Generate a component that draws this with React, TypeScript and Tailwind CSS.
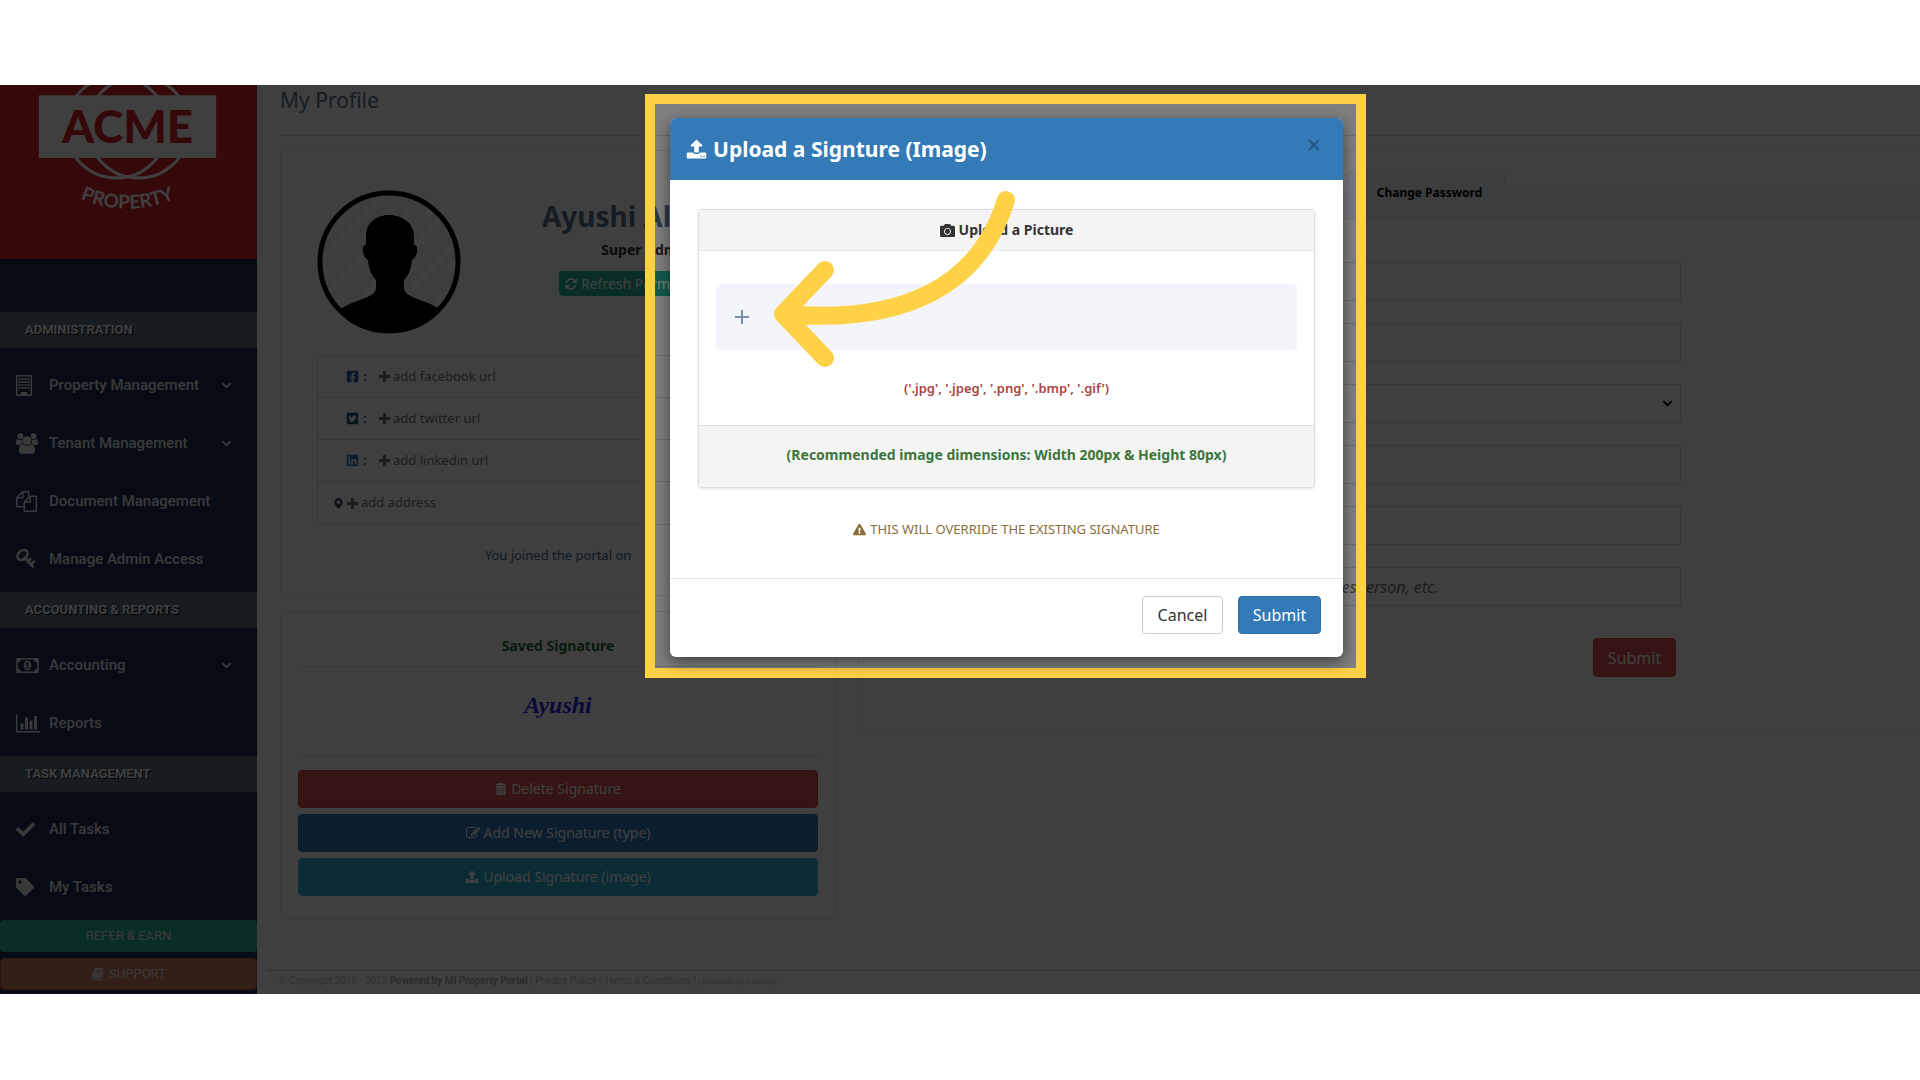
import type { ReactNode } from 'react';
import {
  FaCamera,
  FaCheck,
  FaChevronDown,
  FaExclamationTriangle,
  FaFacebookSquare,
  FaLinkedin,
  FaMapMarkerAlt,
  FaSyncAlt,
  FaTag,
  FaTrashAlt,
  FaTwitterSquare,
} from 'react-icons/fa';

type IconProps = { className?: string };

function UploadIcon({ className }: IconProps) {
  return (
    <svg viewBox="0 0 1664 1792" className={className} fill="currentColor" aria-hidden="true">
      <path d="M1280 1472q0-26-19-45t-45-19-45 19-19 45 19 45 45 19 45-19 19-45zm256 0q0-26-19-45t-45-19-45 19-19 45 19 45 45 19 45-19 19-45zm128-224v320q0 40-28 68t-68 28h-1472q-40 0-68-28t-28-68v-320q0-40 28-68t68-28h427q21 56 70.5 92t110.5 36h256q61 0 110.5-36t70.5-92h427q40 0 68 28t28 68zm-325-648q-17 40-59 40h-256v448q0 26-19 45t-45 19h-256q-26 0-45-19t-19-45v-448h-256q-42 0-59-40-17-39 14-69l448-448q18-19 45-19t45 19l448 448q31 30 14 69z" />
    </svg>
  );
}

function EditIcon({ className }: IconProps) {
  return (
    <svg viewBox="0 0 1792 1792" className={className} fill="currentColor" aria-hidden="true">
      <path d="M888 1184l116-116-152-152-116 116v56h96v96h56zm440-720q-16-16-33 1l-350 350q-17 17-1 33t33-1l350-350q17-17 1-33zm80 594v190q0 119-84.5 203.5t-203.5 84.5h-832q-119 0-203.5-84.5t-84.5-203.5v-832q0-119 84.5-203.5t203.5-84.5h832q63 0 117 25 15 7 18 23 3 17-9 29l-49 49q-14 14-32 8-23-6-45-6h-832q-66 0-113 47t-47 113v832q0 66 47 113t113 47h832q66 0 113-47t47-113v-126q0-13 9-22l64-64q15-15 35-7t20 29zm-96-738l288 288-672 672h-288v-288zm444 132l-92 92-288-288 92-92q28-28 68-28t68 28l152 152q28 28 28 68t-28 68z" />
    </svg>
  );
}

function BookIcon({ className }: IconProps) {
  return (
    <svg viewBox="0 0 1792 1792" className={className} fill="currentColor" aria-hidden="true">
      <path d="M1703 478q40 57 18 129l-275 906q-19 64-76.5 107.5t-122.5 43.5h-923q-77 0-148.5-53.5t-99.5-131.5q-24-67-2-127 0-4 3-27t4-37q1-8-3-21.5t-3-19.5q2-11 8-21t16.5-23.5 16.5-23.5q23-38 45-91.5t30-91.5q3-10 .5-30t-.5-28q3-11 17-28t17-23q21-36 42-92t25-90q1-9-2.5-32t.5-28q4-13 22-30.5t22-22.5q19-26 42.5-84.5t27.5-96.5q1-8-3-25.5t-2-26.5q2-8 9-18t18-23 17-21q8-12 16.5-30.5t15-35 16-36 19.5-32 26.5-23.5 36-11.5 47.5 5.5l-1 3q38-9 51-9h761q74 0 114 56t18 130l-274 906q-36 119-71.5 153.5t-128.5 34.5h-869q-27 0-38 15-11 16-1 43 24 70 144 70h923q29 0 56-15.5t35-41.5l300-987q7-22 5-57 38 15 59 43zm-1064 2q-4 13 2 22.5t20 9.5h608q13 0 25.5-9.5t16.5-22.5l21-64q4-13-2-22.5t-20-9.5h-608q-13 0-25.5 9.5t-16.5 22.5zm-83 256q-4 13 2 22.5t20 9.5h608q13 0 25.5-9.5t16.5-22.5l21-64q4-13-2-22.5t-20-9.5h-608q-13 0-25.5 9.5t-16.5 22.5z" />
    </svg>
  );
}

function PlusIcon() {
  return (
    <svg viewBox="0 0 11 11" className="size-[11px]" stroke="currentColor" strokeWidth="3" aria-hidden="true">
      <path d="M5.5 0v11M0 5.5h11" />
    </svg>
  );
}

function BuildingIcon() {
  return (
    <svg viewBox="0 0 16 21" className="h-[21px] w-4" fill="currentColor" aria-hidden="true">
      <path fillRule="evenodd" d="M1 0h14a1 1 0 0 1 1 1v19a1 1 0 0 1-1 1H1a1 1 0 0 1-1-1V1a1 1 0 0 1 1-1zm.5 1.5v18H5V17h6v2.5h3.5v-18z" />
      {[3, 6, 9, 12].map((y) =>
        [3, 6, 9, 12].map((x) => <rect key={`${x}-${y}`} x={x - 0.5} y={y} width="2" height="2" />)
      )}
    </svg>
  );
}

function UsersIcon() {
  return (
    <svg viewBox="0 0 1920 1792" className="h-[21px] w-[22px]" fill="currentColor" aria-hidden="true">
      <path d="M593 896q-162 5-265 128h-134q-82 0-138-40.5t-56-118.5q0-353 124-353 6 0 43.5 21t97.5 42.5 119 21.5q67 0 133-23-5 37-5 66 0 139 81 256zm1071 637q0 120-73 189.5t-194 69.5h-874q-121 0-194-69.5t-73-189.5q0-53 3.5-103.5t14-109 26.5-108.5 43-97.5 62-81 85.5-53.5 111.5-20q10 0 43 21.5t73 48 107 48 135 21.5 135-21.5 107-48 73-48 43-21.5q61 0 111.5 20t85.5 53.5 62 81 43 97.5 26.5 108.5 14 109 3.5 103.5zm-1024-1277q0 106-75 181t-181 75-181-75-75-181 75-181 181-75 181 75 75 181zm704 384q0 159-112.5 271.5t-271.5 112.5-271.5-112.5-112.5-271.5 112.5-271.5 271.5-112.5 271.5 112.5 112.5 271.5zm576 225q0 78-56 118.5t-138 40.5h-134q-103-123-265-128 81-117 81-256 0-29-5-66 66 23 133 23 59 0 119-21.5t97.5-42.5 43.5-21q124 0 124 353zm-128-609q0 106-75 181t-181 75-181-75-75-181 75-181 181-75 181 75 75 181z" />
    </svg>
  );
}

function FilesIcon() {
  return (
    <svg viewBox="0 0 1792 1792" className="h-[21px] w-[21px]" fill="currentColor" aria-hidden="true">
      <path d="M1696 384q40 0 68 28t28 68v1216q0 40-28 68t-68 28h-960q-40 0-68-28t-28-68v-288h-544q-40 0-68-28t-28-68v-672q0-40 20-88t48-76l408-408q28-28 76-48t88-20h416q40 0 68 28t28 68v328q68-40 128-40h416zm-544 213l-299 299h299v-299zm-640-384l-299 299h299v-299zm196 647l316-316v-416h-384v416q0 40-28 68t-68 28h-416v640h512v-256q0-40 20-88t48-76zm956 804v-1152h-384v416q0 40-28 68t-68 28h-416v640h896z" />
    </svg>
  );
}

function KeyIcon() {
  return (
    <svg viewBox="0 0 20 20" className="h-5 w-5" fill="none" stroke="currentColor" aria-hidden="true">
      <ellipse cx="6.5" cy="6" rx="5.6" ry="4.3" strokeWidth="2.6" transform="rotate(-45 6.5 6)" />
      <path d="M8.5 9l8.5 8.5M12 12.5l2.5-2.5M15 15.5l3-3" strokeWidth="2.6" strokeLinecap="round" />
    </svg>
  );
}

function MoneyIcon() {
  return (
    <svg viewBox="0 0 1920 1792" className="h-[21px] w-[23px]" fill="currentColor" aria-hidden="true">
      <path d="M768 1152h384v-96h-128v-448h-114l-148 137 77 80q42-37 55-57h2v288h-128v96zm512-256q0 70-21 142t-59.5 134-101.5 101-138 39-138-39-101.5-101-59.5-134-21-142 21-142 59.5-134 101.5-101 138-39 138 39 101.5 101 59.5 134 21 142zm512 256v-512q-106 0-181-75t-75-181h-1152q0 106-75 181t-181 75v512q106 0 181 75t75 181h1152q0-106 75-181t181-75zm128-832v1152q0 26-19 45t-45 19h-1792q-26 0-45-19t-19-45v-1152q0-26 19-45t45-19h1792q26 0 45 19t19 45z" />
    </svg>
  );
}

function ChartIcon() {
  return (
    <svg viewBox="0 0 2048 1792" className="h-[21px] w-6" fill="currentColor" aria-hidden="true">
      <path d="M640 896v512h-256v-512h256zm384-512v1024h-256v-1024h256zm1024 1152v128h-2048v-1536h128v1408h1920zm-640-896v768h-256v-768h256zm384-384v1152h-256v-1152h256z" />
    </svg>
  );
}

function Logo() {
  return (
    <svg viewBox="0 0 258 174" className="h-[174px] w-full" role="img" aria-label="ACME Property">
      <g fill="none" stroke="#fff" strokeWidth="3">
        <circle cx="117" cy="42" r="51" />
        <circle cx="139" cy="42" r="51" />
      </g>
      <rect x="39" y="10" width="178" height="63" fill="#fff" />
      <text x="128" y="58" textAnchor="middle" fill="#d7202b" className="font-['Lato'] text-[46px] font-black">
        ACME
      </text>
      <path id="logo-arc" d="M64 105A119 119 0 0 0 192 105" fill="none" />
      <text fill="#fff" textAnchor="middle" className="font-['Lato'] text-[19px] font-bold">
        <textPath href="#logo-arc" startOffset="50%">
          PROPERTY
        </textPath>
      </text>
    </svg>
  );
}

type NavItem = { label: string; icon: ReactNode; expandable?: boolean };

const navGroups: { title: string; items: NavItem[] }[] = [
  {
    title: 'ADMINISTRATION',
    items: [
      { label: 'Property Management', icon: <BuildingIcon />, expandable: true },
      { label: 'Tenant Management', icon: <UsersIcon />, expandable: true },
      { label: 'Document Management', icon: <FilesIcon /> },
      { label: 'Manage Admin Access', icon: <KeyIcon /> },
    ],
  },
  {
    title: 'ACCOUNTING & REPORTS',
    items: [
      { label: 'Accounting', icon: <MoneyIcon />, expandable: true },
      { label: 'Reports', icon: <ChartIcon /> },
    ],
  },
  {
    title: 'TASK MANAGEMENT',
    items: [
      { label: 'All Tasks', icon: <FaCheck size={19} /> },
      { label: 'My Tasks', icon: <FaTag size={18} /> },
    ],
  },
];

function Sidebar() {
  return (
    <aside className="w-[257px] shrink-0 bg-[#1c2c58] pb-1 font-['Roboto',sans-serif] text-[#e7e7e7]">
      <div className="bg-[#d7202b]">
        <Logo />
      </div>
      <nav className="pt-[53px]">
        {navGroups.map((group) => (
          <div key={group.title}>
            <h3 className="flex h-9 items-center bg-[#5f7284] pl-[25px] text-[13px] font-bold text-white [text-shadow:1px_1px_#000]">
              {group.title}
            </h3>
            <ul className="pt-2 pb-1">
              {group.items.map((item) => (
                <li key={item.label}>
                  <a href="#" className="flex h-[58px] items-center pr-[25px] pl-4 text-[15px] font-medium">
                    <span className="w-[33px]">{item.icon}</span>
                    <span className="flex-1">{item.label}</span>
                    {item.expandable && <FaChevronDown size={11} />}
                  </a>
                </li>
              ))}
            </ul>
          </div>
        ))}
      </nav>
      <div className="flex flex-col gap-[6px] text-center text-[13px]">
        <a href="#" className="block rounded-sm bg-[#26b99a] leading-8">
          REFER &amp; EARN
        </a>
        <a href="#" className="flex h-8 items-center justify-center gap-1 rounded-sm border border-[#b8502a] bg-[#c87c5c]">
          <BookIcon className="size-[14px]" /> SUPPORT
        </a>
      </div>
    </aside>
  );
}

const socialLinks = [
  { name: 'facebook', icon: <FaFacebookSquare size={13} className="text-[#2f5f9a]" /> },
  { name: 'twitter', icon: <FaTwitterSquare size={13} className="text-[#1a5276]" /> },
  { name: 'linkedin', icon: <FaLinkedin size={13} className="text-[#337ab7]" /> },
];

function Avatar() {
  return (
    <svg viewBox="0 0 144 144" className="size-36" role="img" aria-label="Profile photo">
      <defs>
        <clipPath id="avatar-clip">
          <circle cx="72" cy="72" r="69" />
        </clipPath>
        <pattern id="avatar-stripes" width="14" height="14" patternUnits="userSpaceOnUse" patternTransform="rotate(45)">
          <rect width="14" height="14" fill="#fff" />
          <rect width="7" height="14" fill="#f2f2f2" />
        </pattern>
      </defs>
      <circle cx="72" cy="72" r="69" fill="url(#avatar-stripes)" />
      <path
        clipPath="url(#avatar-clip)"
        d="M72 25C58 25 49 34 49 46v9c-5-1-4 12 2 15 1 10 4 16 8 20v8c0 6-8 9-16 12-9 3-18 7-24 13v25h108v-25c-6-6-15-10-24-13-8-3-16-6-16-12v-8c4-4 7-10 8-20 6-3 7-16 2-15v-9C97 34 86 25 72 25z"
      />
      <circle cx="72" cy="72" r="69" fill="none" stroke="#000" strokeWidth="5" />
    </svg>
  );
}

function ProfileCard() {
  return (
    <section className="h-[446px] rounded-sm border border-[#e6e9ed] px-9 pt-[39px]">
      <div className="flex">
        <Avatar />
        <div className="flex flex-1 flex-col items-center pt-2 pl-8">
          <h2 className="text-[28px] leading-9 font-bold text-[#5a738e]">Ayushi Alaman</h2>
          <p className="pt-[6px] text-sm font-bold text-[#333]">Super Admin</p>
          <button className="mt-[11px] flex h-[25px] w-[174px] items-center gap-1 rounded-sm bg-[#26b99a] px-[6px] text-sm whitespace-nowrap text-white">
            <FaSyncAlt size={12} className="shrink-0" /> Refresh Permissions
          </button>
        </div>
      </div>
      <ul className="mt-[21px] divide-y divide-[#ddd] rounded border border-[#ddd] text-[13px] text-[#73777b]">
        {socialLinks.map((link) => (
          <li key={link.name} className="flex h-[42px] items-center pl-7">
            {link.icon}
            <span className="w-5 pl-1 font-bold text-[#337ab7]">:</span>
            <a href="#" className="flex items-center gap-[3px]">
              <PlusIcon /> add {link.name} url
            </a>
          </li>
        ))}
        <li className="flex h-[42px] items-center gap-[3px] pl-[15px]">
          <FaMapMarkerAlt size={11} className="text-[#34495e]" />
          <a href="#" className="flex items-center gap-[3px]">
            <PlusIcon /> add address
          </a>
        </li>
      </ul>
      <p className="pt-[21px] text-center text-[13px] text-[#33679a]">You joined the portal on</p>
    </section>
  );
}

function SignatureCard() {
  return (
    <section className="mt-[15px] h-[308px] rounded border border-[#dfe2e6] px-[17px] pt-6 text-center">
      <h3 className="text-sm font-bold text-[#2b662c]">Saved Signature</h3>
      <hr className="mt-[10px] border-[#e0e0e0]" />
      <p className="pt-5 font-['Liberation_Serif',serif] text-[24px] leading-9 font-bold text-[#2424f0] italic">Ayushi</p>
      <hr className="mt-8 border-[#e0e0e0]" />
      <div className="flex flex-col gap-[6px] pt-[14px] text-sm text-white">
        <button className="flex h-[38px] items-center justify-center gap-1 rounded border border-[#d43f3a] bg-[#d9534f]">
          <FaTrashAlt size={12} /> Delete Signature
        </button>
        <button className="flex h-[38px] items-center justify-center gap-1 rounded border border-[#2e6da4] bg-[#337ab7]">
          <EditIcon className="size-[14px]" /> Add New Signature (type)
        </button>
        <button className="flex h-[38px] items-center justify-center gap-1 rounded border border-[#46b8da] bg-[#31b0d5]">
          <UploadIcon className="size-[14px]" /> Upload Signature (image)
        </button>
      </div>
    </section>
  );
}

const fieldClass =
  'h-[39px] w-full border border-[#d5d9dd] bg-transparent px-3 text-base outline-none placeholder:text-[#777] placeholder:italic';

function SettingsCard() {
  return (
    <section className="h-[584px] border border-r-0 border-[#e6e9ed] pt-[21px]">
      <div className="flex h-[47px] items-end border-b border-[#e6e9ed]">
        <div className="h-7 w-[487px] bg-[#f0f5fa]" />
        <button className="h-[47px] w-[159px] rounded-t border border-b-0 border-[#e3e8ee] bg-[#f0f5fa] pb-[5px] pl-2 text-xs font-bold">
          Change Password
        </button>
        <div className="h-7 flex-1 bg-[#f0f5fa]" />
      </div>
      <form className="ml-[348px] flex w-[474px] flex-col gap-[22px] pt-[43px]">
        <input aria-label="First name" className={fieldClass} />
        <input aria-label="Last name" className={fieldClass} />
        <div className="relative">
          <select aria-label="Country" className={`${fieldClass} appearance-none`} />
          <FaChevronDown size={11} className="pointer-events-none absolute top-[14px] right-2" />
        </div>
        <input aria-label="Email" className={fieldClass} />
        <input aria-label="Phone" className={fieldClass} />
        <input aria-label="Title" placeholder="e.g. Manager, Salesperson, etc." className={fieldClass} />
        <button
          type="button"
          className="mt-[10px] mr-[5px] h-[39px] w-[83px] self-end rounded border border-[#d43f3a] bg-[#d9534f] text-base text-white"
        >
          Submit
        </button>
      </form>
    </section>
  );
}

function ProfilePage() {
  return (
    <main className="flex min-w-0 flex-1 flex-col overflow-hidden text-black">
      <h1 className="ml-[23px] border-b border-[#dcdcdc] pb-[20px] text-[21px] leading-[30px] text-[#5a738e]">My Profile</h1>
      <div className="flex items-start gap-[22px] pt-[14px] pl-[23px]">
        <div className="w-[556px] shrink-0">
          <ProfileCard />
          <SignatureCard />
        </div>
        <div className="min-w-0 flex-1">
          <SettingsCard />
        </div>
      </div>
      <footer className="mt-auto ml-[10px] border-t-2 border-[#d9dee4] pb-[2px] pl-3 font-['Roboto',sans-serif] text-[10px] leading-5 text-[#c4c4c4]">
        © Copyright 2016 - 2025 <b className="text-[#b0b0b0]">Powered by MI Property Portal</b> | <a href="#">Privacy Policy</a> |{' '}
        <a href="#">Terms &amp; Conditions</a> | <a href="#" className="text-[8px]">(Template by Colorlib)</a>
      </footer>
    </main>
  );
}

function UploadModal() {
  return (
    <div
      role="dialog"
      aria-labelledby="upload-title"
      className="overflow-hidden rounded-md bg-white text-sm text-[#333] shadow-[0_5px_15px_rgba(0,0,0,0.5)]"
    >
      <header className="flex h-[62px] items-center bg-[#337ab7] pr-[22px] pl-4 text-white">
        <UploadIcon className="size-[21px]" />
        <h2 id="upload-title" className="flex-1 pl-[6px] text-[21px] font-bold">
          Upload a Signture (Image)
        </h2>
        <button aria-label="Close" className="pb-[10px] text-[25px] leading-none text-[#1f5584]">
          ×
        </button>
      </header>
      <div className="px-7 pt-[29px] text-center">
        <div className="overflow-hidden rounded border border-[#ddd] shadow-sm">
          <h3 className="flex h-[41px] items-center justify-center gap-1 border-b border-[#e5e5e5] bg-[#f4f4f4] font-bold">
            <FaCamera size={15} /> Upload a Picture
          </h3>
          <div className="px-[17px] pt-[33px]">
            <button
              aria-label="Choose an image"
              className="flex h-[66px] w-full items-center rounded bg-[#f4f5fa] pl-[19px] text-[#7b8fae]"
            >
              <svg viewBox="0 0 14 14" className="size-[14px]" stroke="currentColor" strokeWidth="2" aria-hidden="true">
                <path d="M7 0v14M0 7h14" />
              </svg>
            </button>
            <p className="pt-7 pb-[27px] text-[13px] leading-5 font-semibold text-[#a94442]">
              ('.jpg', '.jpeg', '.png', '.bmp', '.gif')
            </p>
          </div>
          <p className="border-t border-[#ddd] bg-[#f4f4f4] pb-1 leading-[57px] font-bold text-[#3c763d]">
            (Recommended image dimensions: Width 200px &amp; Height 80px)
          </p>
        </div>
        <p className="flex items-center justify-center gap-1 pt-[31px] pb-[39px] text-[13px] leading-5 text-[#8a6d3b]">
          <FaExclamationTriangle size={13} /> THIS WILL OVERRIDE THE EXISTING SIGNATURE
        </p>
      </div>
      <footer className="flex justify-end gap-[15px] border-t border-[#e5e5e5] px-[22px] pt-[17px] pb-[23px] text-base">
        <button className="h-[38px] w-[81px] rounded border border-[#ccc] bg-white">Cancel</button>
        <button className="h-[38px] w-[83px] rounded border border-[#2e6da4] bg-[#337ab7] text-white">Submit</button>
      </footer>
    </div>
  );
}

export default function App() {
  return (
    <div className="bg-white py-[85px] font-['Noto_Sans',sans-serif]">
      <div className="relative flex overflow-hidden bg-white">
        <Sidebar />
        <ProfilePage />
        <div className="absolute inset-0 flex items-start justify-center bg-black/50 pt-[9px] pl-[91px]">
          {/* highlight frame, darkens everything around it */}
          <div className="relative w-[721px] border-[10px] border-[#ffd147] pt-[14px] pr-[13px] pb-[11px] pl-[15px] shadow-[0_0_0_2000px_rgba(0,0,0,0.5)]">
            <UploadModal />
            <svg
              viewBox="0 0 250 190"
              className="pointer-events-none absolute top-[84px] left-[115px] h-[190px] w-[250px]"
              fill="none"
              stroke="#ffd147"
              strokeWidth="18"
              strokeLinecap="round"
              strokeLinejoin="round"
              aria-hidden="true"
            >
              <path d="M236 12C210 97 135 137 13 126M55 82L13 126L55 170" />
            </svg>
          </div>
        </div>
      </div>
    </div>
  );
}
